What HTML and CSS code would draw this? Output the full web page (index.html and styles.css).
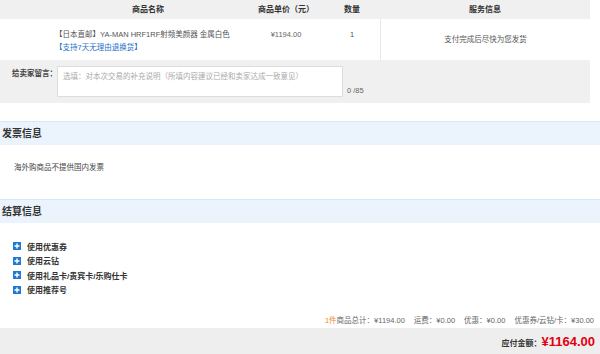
FILE: index.html
```html
<!DOCTYPE html>
<html lang="zh-CN">
<head>
    <meta charset="UTF-8">
    <meta name="viewport" content="width=device-width, initial-scale=1.0">
    <title>订单结算</title>
    <link rel="stylesheet" href="styles.css">
</head>
<body>

<div class="order">
    <div class="order-head">
        <span></span>
        <span>商品名称</span>
        <span>商品单价（元）</span>
        <span>数量</span>
        <span>服务信息</span>
    </div>
    <div class="order-item">
        <span></span>
        <div class="item-name">
            <p>【日本直邮】YA-MAN HRF1RF射频美颜器 金属白色</p>
            <p class="item-tag">【支持7天无理由退换货】</p>
        </div>
        <div class="item-price">¥1194.00</div>
        <div class="item-qty">1</div>
        <div class="item-service">支付完成后尽快为您发货</div>
    </div>
    <div class="order-note">
        <label for="note">给卖家留言：</label>
        <textarea id="note" placeholder="选填：对本次交易的补充说明（所填内容建议已经和卖家达成一致意见）"></textarea>
        <span class="note-count">0 /85</span>
    </div>
</div>

<div class="section">
    <h2>发票信息</h2>
    <div class="invoice-body">海外购商品不提供国内发票</div>
</div>

<div class="section">
    <h2>结算信息</h2>
    <ul class="options">
        <li><svg width="8" height="8" viewBox="0 0 8 8"><rect width="8" height="8" fill="#1f78d1"/><path d="M4 1.5v5M1.5 4h5" stroke="#fff" stroke-width="1.4"/></svg>使用优惠券</li>
        <li><svg width="8" height="8" viewBox="0 0 8 8"><rect width="8" height="8" fill="#1f78d1"/><path d="M4 1.5v5M1.5 4h5" stroke="#fff" stroke-width="1.4"/></svg>使用云钻</li>
        <li><svg width="8" height="8" viewBox="0 0 8 8"><rect width="8" height="8" fill="#1f78d1"/><path d="M4 1.5v5M1.5 4h5" stroke="#fff" stroke-width="1.4"/></svg>使用礼品卡/贵宾卡/乐购仕卡</li>
        <li><svg width="8" height="8" viewBox="0 0 8 8"><rect width="8" height="8" fill="#1f78d1"/><path d="M4 1.5v5M1.5 4h5" stroke="#fff" stroke-width="1.4"/></svg>使用推荐号</li>
    </ul>
    <div class="summary">
        <span><em>1件</em>商品总计：¥1194.00</span>
        <span>运费：¥0.00</span>
        <span>优惠：¥0.00</span>
        <span>优惠券/云钻/卡：¥30.00</span>
    </div>
    <div class="total">
        应付金额：<strong>¥1164.00</strong>
    </div>
</div>

</body>
</html>
```

FILE: styles.css
```css
body {
    margin: 0;
    font-family: "Liberation Sans", "Noto Sans CJK SC", sans-serif;
    font-size: 7.5px;
    color: #333;
    background-color: #fff;
}
p {
    margin: 0;
}
.order {
    width: 590px;
}
.order-head,
.order-item {
    display: grid;
    grid-template-columns: 48px 200px 76px 56px 210px;
}
.order-head {
    height: 19px;
    line-height: 19px;
    background-color: #f0f0f0;
    font-size: 8px;
    font-weight: bold;
    color: #333;
    text-align: center;
}
.order-item {
    height: 41px;
    color: #555;
}
.item-name {
    padding: 9px 0 0 7px;
    line-height: 13px;
}
.item-tag {
    color: #1e6fc8;
}
.item-price,
.item-qty {
    padding-top: 9px;
    line-height: 13px;
    text-align: center;
}
.item-price {
    color: #666;
}
.item-service {
    border-left: 1px solid #e8e8e8;
    text-align: center;
    line-height: 41px;
}
.order-note {
    display: flex;
    align-items: flex-start;
    height: 43px;
    background-color: #f0f0f0;
}
.order-note label {
    width: 45px;
    padding: 7px 0 0 12px;
    font-weight: bold;
    color: #444;
}
.order-note textarea {
    width: 286px;
    height: 31px;
    margin-top: 6px;
    padding: 3px 5px;
    box-sizing: border-box;
    border: 1px solid #ddd;
    background-color: #fff;
    font: inherit;
    resize: none;
    outline: none;
}
.order-note textarea::placeholder {
    color: #aaa;
}
.note-count {
    padding: 26px 0 0 4px;
    color: #666;
}
.section {
    margin-top: 18px;
}
.section + .section {
    margin-top: 0;
}
.section h2 {
    margin: 0;
    height: 23px;
    line-height: 23px;
    padding-left: 2px;
    border-top: 1px solid #d8e7f7;
    background-color: #ebf3fc;
    font-size: 10px;
    font-weight: bold;
    color: #333;
}
.invoice-body {
    height: 54px;
    line-height: 46px;
    padding-left: 14px;
    box-sizing: border-box;
    color: #444;
}
.options {
    list-style: none;
    margin: 0;
    padding: 16px 0 0 13px;
}
.options li {
    display: flex;
    align-items: center;
    gap: 6px;
    height: 14.5px;
    font-size: 8px;
    font-weight: bold;
    color: #333;
}
.summary {
    display: flex;
    justify-content: flex-end;
    gap: 9px;
    padding: 17px 6px 0 0;
    height: 14px;
    color: #666;
}
.summary em {
    font-style: normal;
    color: #f08a24;
}
.total {
    height: 27px;
    line-height: 27px;
    padding-right: 5px;
    background-color: #eee;
    text-align: right;
    font-size: 8px;
    font-weight: bold;
    color: #333;
}
.total strong {
    font-size: 13px;
    color: #e4000f;
}
```
